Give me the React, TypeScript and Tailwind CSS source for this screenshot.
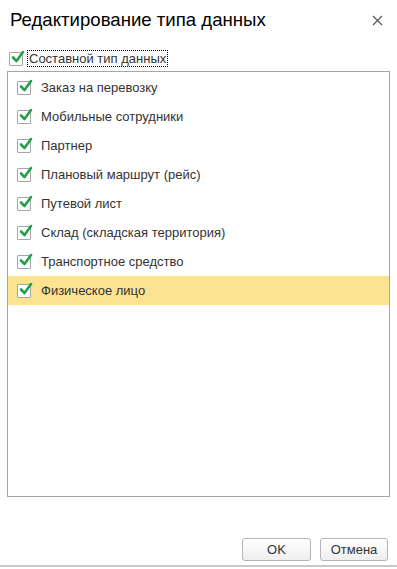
import React from 'react';

const ITEMS = [
  'Заказ на перевозку',
  'Мобильные сотрудники',
  'Партнер',
  'Плановый маршрут (рейс)',
  'Путевой лист',
  'Склад (складская территория)',
  'Транспортное средство',
  'Физическое лицо',
];

const Check: React.FC = () => (
  <div className="w-[14px] h-[14px] border border-[#a6a6a6] bg-white relative shrink-0 rounded-[1px]">
    <svg className="absolute left-[1px] -top-[3px]" width="14" height="14" viewBox="0 0 14 14">
      <path d="M2 7.5 L5.5 11 L12 2" fill="none" stroke="#22a04b" strokeWidth="2.6" strokeLinecap="round" strokeLinejoin="round" />
    </svg>
  </div>
);

export default function App() {
  return (
    <div
      className="w-[397px] h-[569px] bg-white relative flex flex-col text-[#333]"
      style={{ fontFamily: '"Liberation Sans", Arial, sans-serif' }}
    >
      <div className="flex items-center justify-between pl-[10px] pr-[14px] pt-[5px] h-[36px]">
        <div className="text-[18.6px] text-black leading-none">Редактирование типа данных</div>
        <svg width="11" height="11" viewBox="0 0 11 11">
          <path d="M1 1 L10 10 M10 1 L1 10" stroke="#555" strokeWidth="1.2" />
        </svg>
      </div>

      <div className="flex items-center pl-[9px] mt-[14px] h-[17px]">
        <Check />
        <span className="ml-[4px] px-[1px] text-[13px] leading-[15px] border border-dotted border-black text-[#333]">
          Составной тип данных
        </span>
      </div>

      <div className="mx-[7px] mt-[4px] h-[426px] border border-[#a5a5a5] pt-[1px]">
        {ITEMS.map((item, i) => (
          <div
            key={item}
            className={`h-[29px] flex items-center pl-[9px] ${i === ITEMS.length - 1 ? 'bg-[#fce38f]' : ''}`}
          >
            <Check />
            <span className="ml-[10px] text-[13px]">{item}</span>
          </div>
        ))}
      </div>

      <div className="flex justify-end gap-[9px] pr-[9px] mt-[41px]">
        <button className="w-[69px] h-[23px] border border-[#b4b4b4] rounded-[3px] bg-gradient-to-b from-white to-[#efefef] text-[13px] text-[#333]">
          OK
        </button>
        <button className="w-[68px] h-[23px] border border-[#b4b4b4] rounded-[3px] bg-gradient-to-b from-white to-[#efefef] text-[13px] text-[#333]">
          Отмена
        </button>
      </div>

      <div className="absolute left-0 right-0 bottom-[2px] h-[2px] bg-[#c8c8c8]" />
    </div>
  );
}
